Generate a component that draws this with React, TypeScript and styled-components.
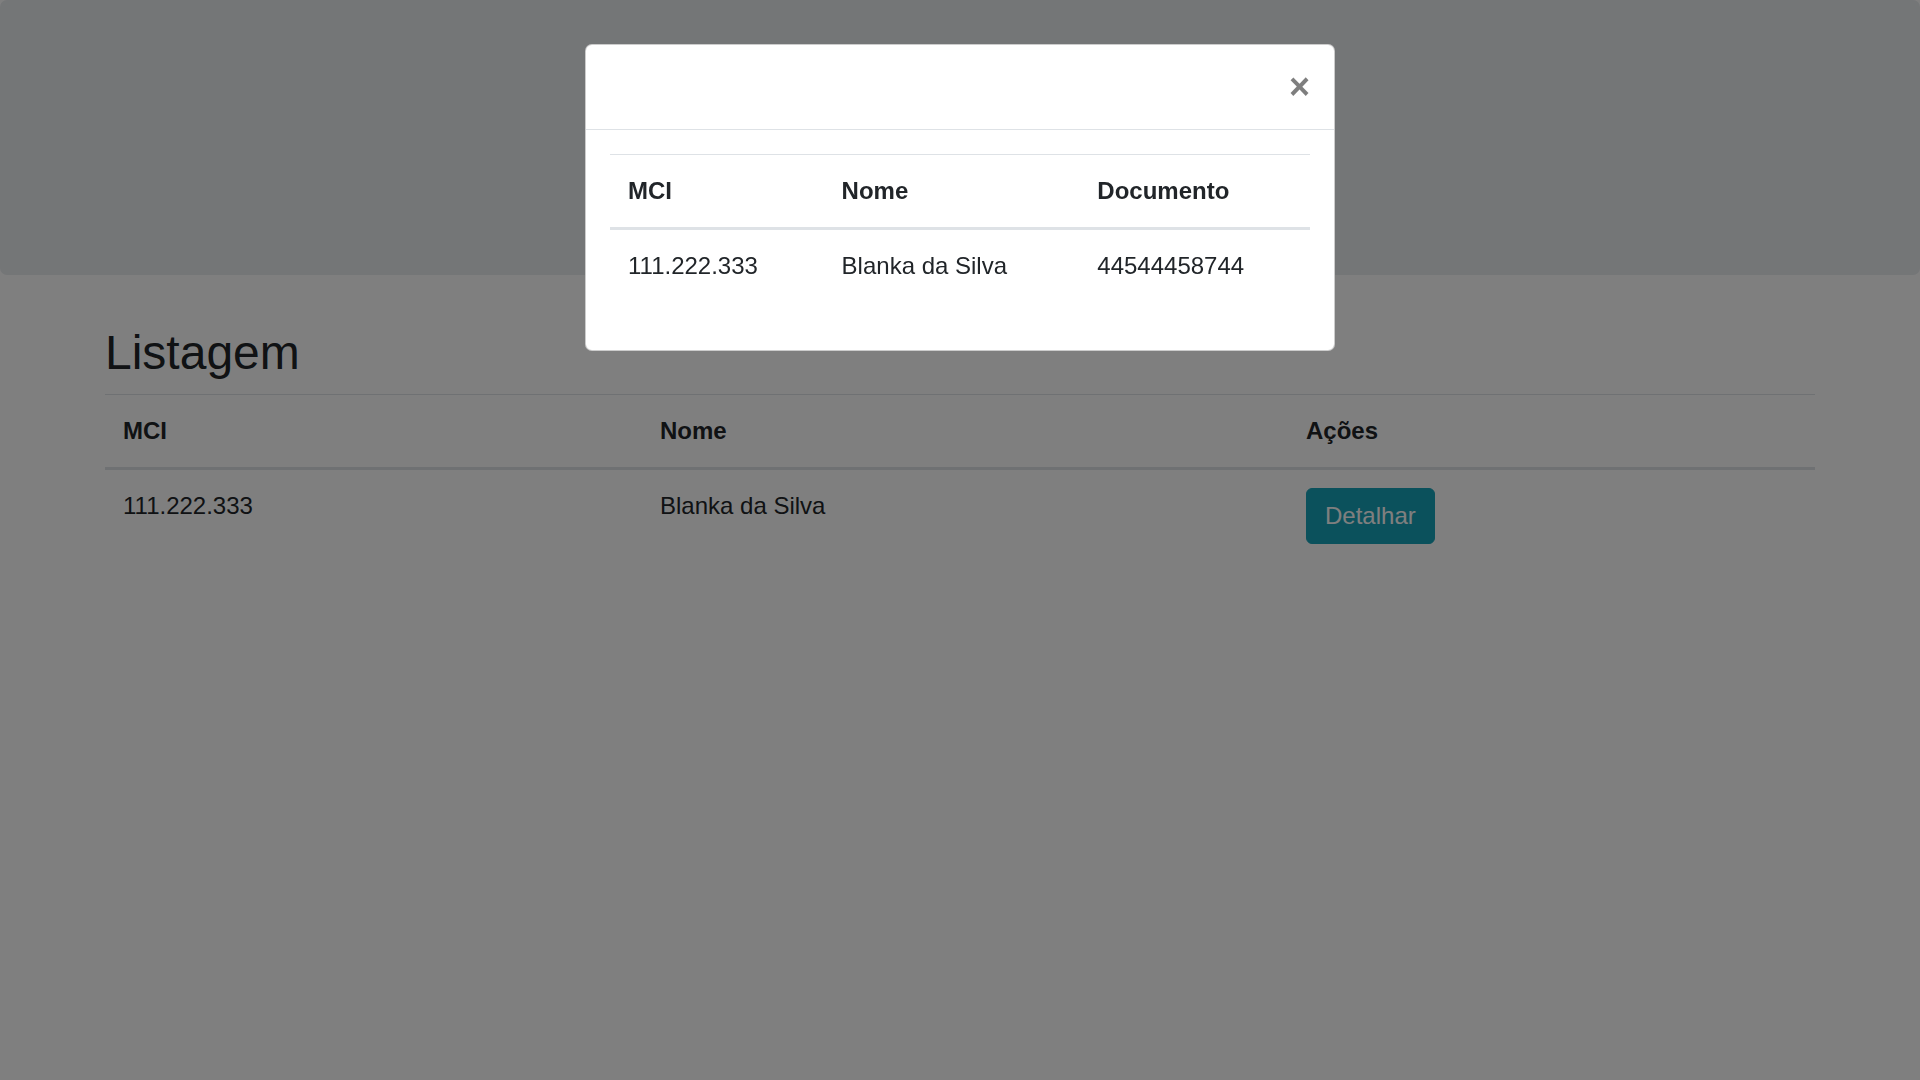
import React from 'react'
import styled, { createGlobalStyle } from 'styled-components'

const GlobalStyle = createGlobalStyle`
  body {
    margin: 0;
    background: #fff;
    font-family: "Liberation Sans", Arial, sans-serif;
    font-size: 24px;
    line-height: 1.5;
    color: #212529;
  }
`

const Jumbotron = styled.div`
  height: 275px;
  background-color: #e9ecef;
  border-radius: 7px;
  margin-bottom: 49px;
`

const Container = styled.div`
  width: 1710px;
  margin: 0 auto;
`

const Title = styled.h1`
  margin: 0 0 12px;
  font-size: 48px;
  font-weight: 500;
  line-height: 1.2;
`

const Table = styled.table`
  width: 100%;
  border-collapse: collapse;
  table-layout: fixed;
  margin-bottom: 24px;

  th,
  td {
    padding: 18px;
    text-align: left;
    vertical-align: top;
    border-top: 1px solid #dee2e6;
  }

  thead th {
    font-weight: 700;
    vertical-align: bottom;
    border-bottom: 3px solid #dee2e6;
  }

  tbody tr:first-child td {
    border-top: 0;
  }
`

const Col = styled.col<{ $w: number }>`
  width: ${(p) => p.$w}px;
`

const InfoButton = styled.button`
  font-family: inherit;
  font-size: 24px;
  line-height: 1.5;
  padding: 9px 18px;
  color: #fff;
  background-color: #17a2b8;
  border: 1px solid #17a2b8;
  border-radius: 6px;
  cursor: pointer;
`

const Backdrop = styled.div`
  position: fixed;
  inset: 0;
  background-color: rgba(0, 0, 0, 0.5);
`

const ModalLayer = styled.div`
  position: fixed;
  inset: 0;
  overflow-y: auto;
`

const ModalDialog = styled.div`
  width: 748px;
  margin: 44px auto;
  background: #fff;
  border: 1px solid rgba(0, 0, 0, 0.2);
  border-radius: 7px;
`

const ModalHeader = styled.div`
  display: flex;
  align-items: flex-start;
  justify-content: space-between;
  padding: 24px;
  border-bottom: 1px solid #dee2e6;
`

const CloseButton = styled.button`
  margin: -24px -24px -24px auto;
  padding: 24px;
  background: transparent;
  border: 0;
  font-family: inherit;
  font-size: 36px;
  font-weight: 700;
  line-height: 1;
  color: #000;
  opacity: 0.5;
  text-shadow: 0 1px 0 #fff;
  cursor: pointer;
`

const ModalBody = styled.div`
  padding: 24px;
`

const clientes = [{ mci: '111.222.333', nome: 'Blanka da Silva', documento: '44544458744' }]

export default function App() {
  return (
    <>
      <GlobalStyle />
      <Jumbotron />
      <Container>
        <Title>Listagem</Title>
        <Table>
          <colgroup>
            <Col $w={537} />
            <Col $w={646} />
            <Col $w={527} />
          </colgroup>
          <thead>
            <tr>
              <th>MCI</th>
              <th>Nome</th>
              <th>Ações</th>
            </tr>
          </thead>
          <tbody>
            {clientes.map((c) => (
              <tr key={c.mci}>
                <td>{c.mci}</td>
                <td>{c.nome}</td>
                <td>
                  <InfoButton>Detalhar</InfoButton>
                </td>
              </tr>
            ))}
          </tbody>
        </Table>
      </Container>

      <Backdrop />
      <ModalLayer>
        <ModalDialog>
          <ModalHeader>
            <CloseButton aria-label="Close">×</CloseButton>
          </ModalHeader>
          <ModalBody>
            <Table>
              <colgroup>
                <Col $w={213} />
                <Col $w={255} />
                <Col $w={230} />
              </colgroup>
              <thead>
                <tr>
                  <th>MCI</th>
                  <th>Nome</th>
                  <th>Documento</th>
                </tr>
              </thead>
              <tbody>
                {clientes.map((c) => (
                  <tr key={c.mci}>
                    <td>{c.mci}</td>
                    <td>{c.nome}</td>
                    <td>{c.documento}</td>
                  </tr>
                ))}
              </tbody>
            </Table>
          </ModalBody>
        </ModalDialog>
      </ModalLayer>
    </>
  )
}
